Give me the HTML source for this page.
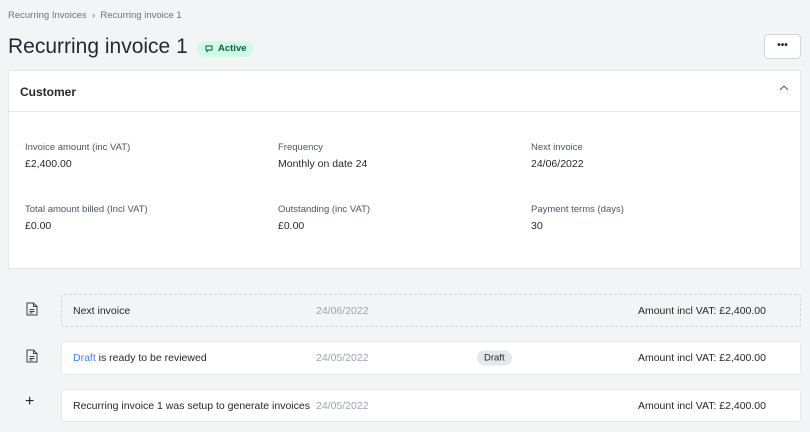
<!DOCTYPE html>
<html><head><style>
*{box-sizing:border-box;margin:0;padding:0}
body{width:810px;height:432px;background:#f3f4f6;font-family:"Liberation Sans",sans-serif;color:#27272a;position:relative;overflow:hidden}
.a{position:absolute}
.crumb{left:8px;top:10px;font-size:9.5px;color:#6b7280}
h1{position:absolute;left:8px;top:35px;font-size:21px;font-weight:400;color:#1f2937}
.badge{left:197px;top:41px;width:56px;height:16px;border-radius:8px;background:#d1fae5;color:#065f46;font-size:9.5px;font-weight:bold;padding:2px 0 0 21px}
.btn{left:764px;top:34px;width:37px;height:25px;border:1px solid #d1d5db;border-radius:4px;background:#fff;text-align:center;font-size:10px;line-height:22px;font-weight:bold}
.card{left:8px;top:70px;width:793px;height:199px;background:#fff;border:1px solid #e5e7eb}
.hd{height:41px;border-bottom:1px solid #e5e7eb;font-size:12px;font-weight:bold;padding:14px 0 0 11px}
.lbl{font-size:9.5px;color:#4b5563}
.val{font-size:10.5px;color:#27272a}
.row{left:61px;width:740px;background:#fff;border:1px solid #e5e7eb;border-radius:3px;font-size:10.5px}
.row span{position:absolute;top:50%;transform:translateY(-50%)}
.d{left:254px;color:#9ca3af}
.amt{right:34px}
</style></head><body>
<div class="a crumb">Recurring Invoices &nbsp;›&nbsp; Recurring invoice 1</div>
<h1>Recurring invoice 1</h1>
<div class="a badge"><svg class="a" style="left:8px;top:4px" width="8" height="8" viewBox="0 0 8 8"><path d="M1 1h6v4H3.5L2 6.5V5H1z" fill="none" stroke="#065f46" stroke-width="1"/></svg>Active</div>
<div class="a btn">•••</div>
<div class="a card">
<div class="hd">Customer</div>
<svg class="a" style="left:770px;top:13px" width="10" height="7"><path d="M1 6L5 2l4 4" fill="none" stroke="#4b5563" stroke-width="1"/></svg>
<div class="a lbl" style="left:16px;top:71px">Invoice amount (inc VAT)</div>
<div class="a val" style="left:16px;top:87px">£2,400.00</div>
<div class="a lbl" style="left:269px;top:71px">Frequency</div>
<div class="a val" style="left:269px;top:87px">Monthly on date 24</div>
<div class="a lbl" style="left:522px;top:71px">Next invoice</div>
<div class="a val" style="left:522px;top:87px">24/06/2022</div>
<div class="a lbl" style="left:16px;top:133px">Total amount billed (Incl VAT)</div>
<div class="a val" style="left:16px;top:149px">£0.00</div>
<div class="a lbl" style="left:269px;top:133px">Outstanding (inc VAT)</div>
<div class="a val" style="left:269px;top:149px">£0.00</div>
<div class="a lbl" style="left:522px;top:133px">Payment terms (days)</div>
<div class="a val" style="left:522px;top:149px">30</div>
</div>
<svg class="a" style="left:26px;top:302px" width="12" height="14" viewBox="0 0 12 14"><path d="M1 1h6.5L11 4.5V13H1z M7.5 1v3.5H11 M3.5 7.5h5 M3.5 9.5h5 M3.5 11h3" fill="none" stroke="#374151" stroke-width="1"/></svg>
<svg class="a" style="left:26px;top:349px" width="12" height="14" viewBox="0 0 12 14"><path d="M1 1h6.5L11 4.5V13H1z M7.5 1v3.5H11 M3.5 7.5h5 M3.5 9.5h5 M3.5 11h3" fill="none" stroke="#374151" stroke-width="1"/></svg>
<div class="a" style="left:25px;top:393px;font-size:16px;color:#27272a">+</div>
<div class="a row" style="top:294px;height:33px;border:1px dashed #d1d5db;background:transparent"><span style="left:11px">Next invoice</span><span class="d">24/06/2022</span><span class="amt">Amount incl VAT: £2,400.00</span></div>
<div class="a row" style="top:341px;height:34px"><span style="left:11px"><span style="position:static;transform:none;color:#3b82f6">Draft</span> is ready to be reviewed</span><span class="d">24/05/2022</span><span style="left:415px;background:#e5e7eb;border-radius:9px;padding:2px 7px;font-size:9.5px">Draft</span><span class="amt">Amount incl VAT: £2,400.00</span></div>
<div class="a row" style="top:389px;height:33px"><span style="left:11px">Recurring invoice 1 was setup to generate invoices</span><span class="d">24/05/2022</span><span class="amt">Amount incl VAT: £2,400.00</span></div>
</body></html>
